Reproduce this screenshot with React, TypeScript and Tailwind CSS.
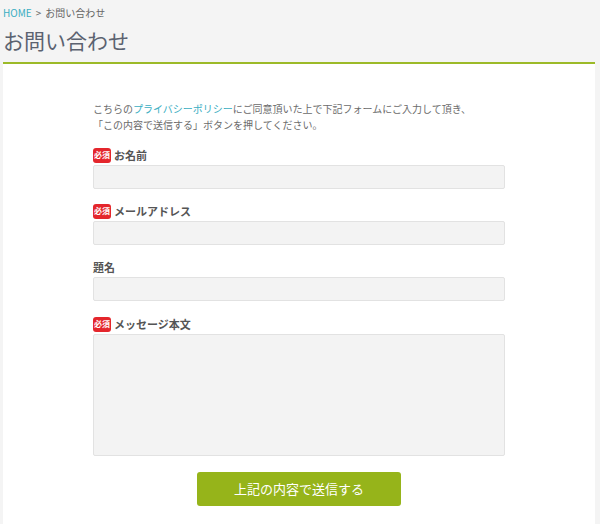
const jp = '"Noto Sans CJK JP", "Noto Sans", sans-serif';

function Required() {
  return (
    <span className="inline-flex h-[15px] w-[18px] items-center justify-center rounded-[3px] bg-[#e4262c] text-[8px] font-bold leading-none text-white">
      必須
    </span>
  );
}

function FieldLabel({ text, required }: { text: string; required?: boolean }) {
  return (
    <label className="flex h-[16px] items-center gap-[3px] text-[11px] font-bold text-[#555]">
      {required ? <Required /> : null}
      <span>{text}</span>
    </label>
  );
}

export default function App() {
  const fields = [
    { text: 'お名前', required: true },
    { text: 'メールアドレス', required: true },
    { text: '題名', required: false },
  ];

  return (
    <div className="min-h-[524px] bg-[#f4f4f4] text-[#555]" style={{ fontFamily: jp }}>
      <div className="px-[3px]">
        <nav aria-label="breadcrumb" className="pt-[6px] text-[10px] leading-[14px]">
          <a href="#" className="text-[#3aaec2]">
            HOME
          </a>
          <span className="ml-[4px] text-[#666]">&gt;</span>
          <span className="ml-[4px] text-[#666]">お問い合わせ</span>
        </nav>
        <h1 className="mt-[6px] text-[21px] leading-[28px] font-normal text-[#5b6270]">お問い合わせ</h1>
      </div>

      <main className="mt-[8px] mr-[5px] ml-[3px] border-t-2 border-[#9cba28] bg-white pb-[20px]">
        <div className="ml-[90px] w-[412px] pt-[37px]">
          <p className="text-[10px] leading-[16px] text-[#6b6b6b]">
            こちらの
            <a href="#" className="text-[#3aaec2]">
              プライバシーポリシー
            </a>
            にご同意頂いた上で下記フォームにご入力して頂き、
            <br />
            「この内容で送信する」ボタンを押してください。
          </p>

          <form className="mt-[14px] flex flex-col gap-[14px]">
            {fields.map((f) => (
              <div key={f.text} className="flex flex-col gap-[2px]">
                <FieldLabel text={f.text} required={f.required} />
                <input
                  type="text"
                  className="h-[24px] w-full rounded-[2px] border border-[#e2e2e2] bg-[#f3f3f3] px-2 text-[11px] outline-none"
                />
              </div>
            ))}
            <div className="mt-[1px] flex flex-col gap-[2px]">
              <FieldLabel text="メッセージ本文" required />
              <textarea className="h-[122px] w-full resize-none rounded-[2px] border border-[#e2e2e2] bg-[#f3f3f3] px-2 py-1 text-[11px] outline-none" />
            </div>
            <div className="mt-[2px] flex justify-center">
              <button
                type="button"
                className="h-[34px] w-[204px] rounded-[3px] bg-[#96b41a] text-[13px] text-white"
              >
                上記の内容で送信する
              </button>
            </div>
          </form>
        </div>
      </main>
    </div>
  );
}
